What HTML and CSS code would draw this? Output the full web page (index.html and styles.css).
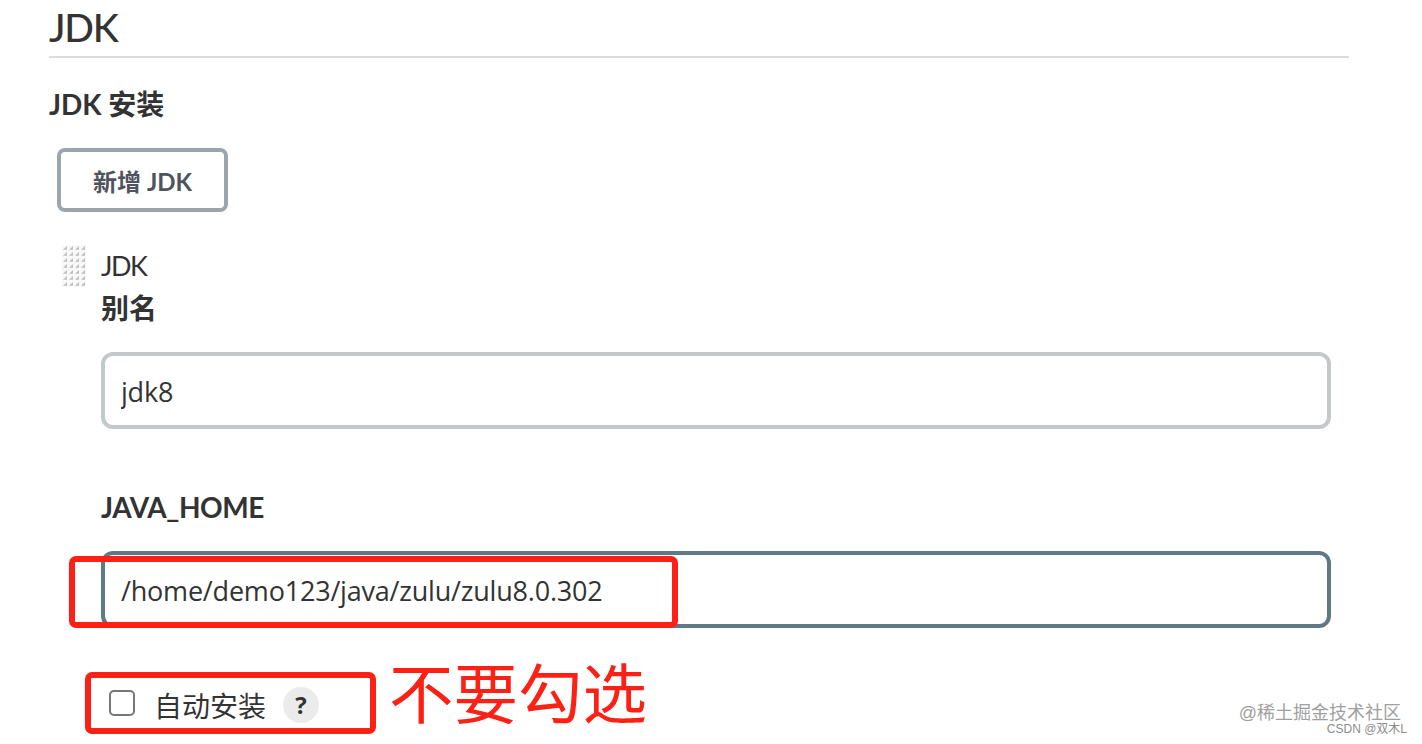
FILE: index.html
```
<!DOCTYPE html>
<html lang="zh-CN">
<head>
  <meta charset="UTF-8">
  <meta name="viewport" content="width=device-width, initial-scale=1.0">
  <title>JDK</title>
  <link rel="stylesheet" href="styles.css">
</head>
<body>
  <div class="page">
    <h1 class="section-title">JDK</h1>
    <h2 class="label list-label">JDK 安装</h2>
    <button class="add-button" type="button">新增 JDK</button>

    <div class="tool">
      <!-- Drag handle -->
      <svg class="handle" width="24" height="42" viewBox="0 0 24 42">
        <defs>
          <pattern id="dots" width="6" height="6" patternUnits="userSpaceOnUse">
            <rect width="6" height="6" fill="#f8f8f8"/>
            <path d="M5 1V4.8H1Z" fill="#c0bebc"/>
          </pattern>
        </defs>
        <rect width="24" height="42" fill="url(#dots)"/>
      </svg>
      <div class="fields">
        <div class="tool-name">JDK</div>
        <label class="label" for="name">别名</label>
        <input class="field" id="name" type="text" value="jdk8">
        <label class="label label-home" for="home">JAVA_HOME</label>
        <input class="field field-focus" id="home" type="text" value="/home/demo123/java/zulu/zulu8.0.302">
        <div class="check-row">
          <input class="check" id="auto" type="checkbox">
          <label class="check-label" for="auto">自动安装</label>
          <span class="help">?</span>
        </div>
      </div>
    </div>
  </div>

  <!-- Red marks over the form -->
  <div class="mark mark-home"></div>
  <div class="mark mark-auto"></div>
  <div class="mark-text">不要勾选</div>

  <div class="watermark">@稀土掘金技术社区</div>
  <div class="watermark watermark-small">CSDN @双木L</div>
</body>
</html>
```
FILE: styles.css
```
* {
  box-sizing: border-box;
}

body {
  margin: 0;
  height: 744px;
  overflow: hidden;
  position: relative;
  background: #fff;
  color: #333;
  font-family: "Open Sans", "Noto Sans CJK SC", sans-serif;
  font-size: 28px;
}

.page {
  padding: 0 73px 0 49px;
}

.section-title,
.label,
.tool-name,
.add-button {
  font-family: Lato, "Noto Sans CJK SC", sans-serif;
}

.section-title {
  margin: 0;
  height: 58px;
  border-bottom: 2px solid #dcdcdc;
  font-size: 39px;
  font-weight: 500;
  line-height: 55px;
  letter-spacing: -1.2px;
}

.label {
  display: block;
  margin: 0;
  height: 43px;
  line-height: 43px;
  font-size: 28px;
  font-weight: 700;
}

.list-label {
  margin-top: 25px;
}

.add-button {
  display: block;
  width: 171px;
  height: 64px;
  margin: 22px 0 0 8px;
  padding: 0;
  border: 4px solid #9ba5ae;
  border-radius: 8px;
  background: #fff;
  color: #4d545d;
  font-size: 24px;
  font-weight: 700;
}

.tool {
  display: flex;
  margin-top: 33px;
  padding-left: 13px;
}

.handle {
  flex: none;
  margin-right: 15px;
}

.fields {
  width: 1230px;
}

.tool-name {
  height: 42px;
  line-height: 42px;
  font-size: 27px;
  letter-spacing: -1.5px;
}

.field {
  display: block;
  width: 100%;
  height: 77px;
  margin-top: 22px;
  padding: 2px 16px 0;
  border: 4px solid #c3c8cb;
  border-radius: 12px;
  outline: none;
  background: #fff;
  color: #333;
  font-family: inherit;
  font-size: 27px;
  letter-spacing: -0.2px;
}

.field-focus {
  border-color: #607987;
}

.label-home {
  margin-top: 57px;
  letter-spacing: -0.4px;
}

.check-row {
  display: flex;
  align-items: center;
  height: 54px;
  margin-top: 50px;
  padding-left: 8px;
}

.check {
  appearance: none;
  width: 26px;
  height: 26px;
  margin: 0 19px 4px 0;
  border: 2px solid #767676;
  border-radius: 5px;
  background: #fff;
}

.check-label {
  padding-top: 2px;
  line-height: 42px;
}

.help {
  width: 36px;
  height: 36px;
  margin-left: 17px;
  border-radius: 50%;
  background: #ebebeb;
  font-size: 24px;
  font-weight: 700;
  line-height: 36px;
  text-align: center;
}

.mark {
  position: absolute;
  border: 6px solid #fc2015;
  border-radius: 7px;
}

.mark-home {
  left: 69px;
  top: 556px;
  width: 609px;
  height: 72px;
}

.mark-auto {
  left: 85px;
  top: 672px;
  width: 291px;
  height: 62px;
}

.mark-text {
  position: absolute;
  left: 389px;
  top: 646px;
  color: #fc2015;
  font-size: 64.5px;
  line-height: 94px;
  white-space: nowrap;
}

.watermark {
  position: absolute;
  right: 21px;
  top: 701px;
  color: #a0a0a0;
  font-family: "Liberation Sans", "Noto Sans CJK SC", sans-serif;
  font-size: 18px;
  line-height: 24px;
  white-space: nowrap;
}

.watermark-small {
  right: 15px;
  top: 720px;
  color: #8c8c8c;
  font-size: 12px;
  line-height: 18px;
}
```
